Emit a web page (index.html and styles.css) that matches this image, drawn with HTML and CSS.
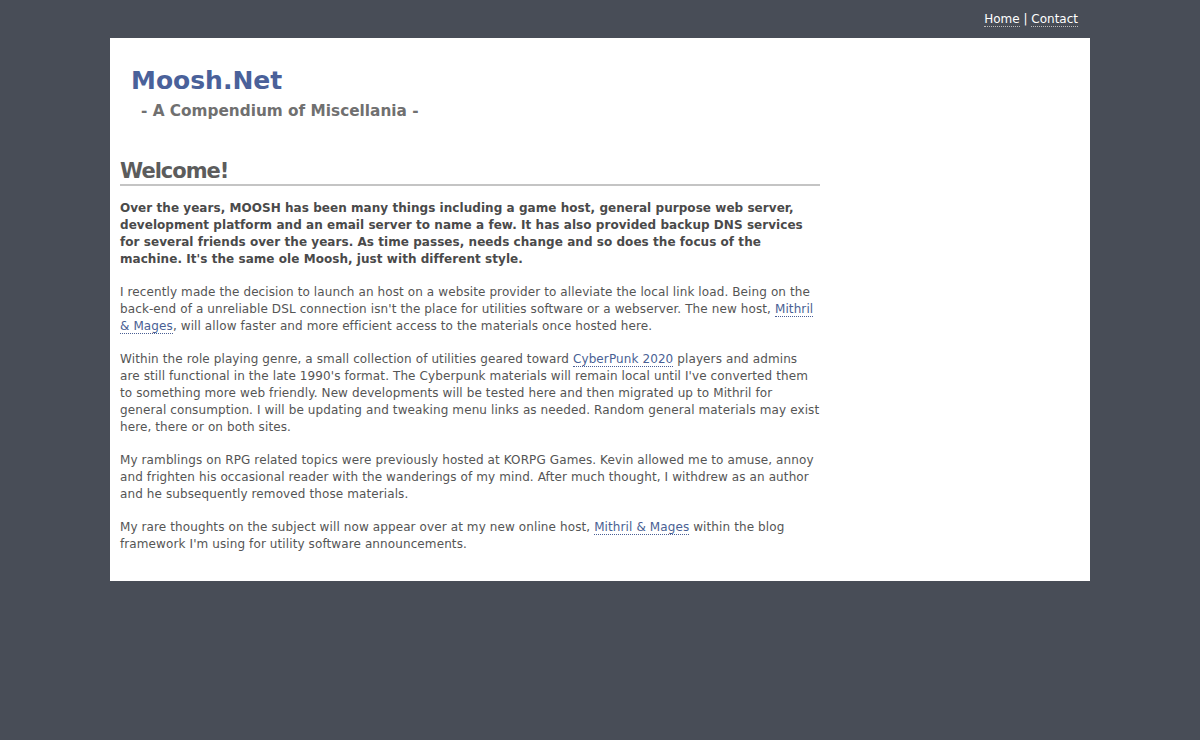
FILE: index.html
```html
<!DOCTYPE html>
<html>
<head>
<meta charset="utf-8">
<title>Moosh.Net</title>
<link rel="stylesheet" href="styles.css">
</head>
<body>
<div class="page">
  <div class="topnav"><a href="#">Home</a> | <a href="#">Contact</a></div>
  <div class="box">
    <div class="header">
      <div class="title">Moosh.Net</div>
      <div class="subtitle">- A Compendium of Miscellania -</div>
    </div>
    <div class="content">
      <h1>Welcome!</h1>
      <p class="lead">Over the years, MOOSH has been many things including a game host, general purpose web server, development platform and an email server to name a few. It has also provided backup DNS services for several friends over the years. As time passes, needs change and so does the focus of the machine. It's the same ole Moosh, just with different style.</p>
      <p>I recently made the decision to launch an host on a website provider to alleviate the local link load. Being on the back-end of a unreliable DSL connection isn't the place for utilities software or a webserver. The new host, <a href="#">Mithril &amp; Mages</a>, will allow faster and more efficient access to the materials once hosted here.</p>
      <p>Within the role playing genre, a small collection of utilities geared toward <a href="#">CyberPunk 2020</a> players and admins are still functional in the late 1990's format. The Cyberpunk materials will remain local until I've converted them to something more web friendly. New developments will be tested here and then migrated up to Mithril for general consumption. I will be updating and tweaking menu links as needed. Random general materials may exist here, there or on both sites.</p>
      <p>My ramblings on RPG related topics were previously hosted at KORPG Games. Kevin allowed me to amuse, annoy and frighten his occasional reader with the wanderings of my mind. After much thought, I withdrew as an author and he subsequently removed those materials.</p>
      <p>My rare thoughts on the subject will now appear over at my new online host, <a href="#">Mithril &amp; Mages</a> within the blog framework I'm using for utility software announcements.</p>
    </div>
  </div>
</div>
</body>
</html>
```
FILE: styles.css
```css
html, body {
  margin: 0;
  padding: 0;
  background: #484d57;
}
body {
  font-family: "DejaVu Sans", Verdana, sans-serif;
  font-size: 12px;
  color: #555;
}
.page {
  width: 980px;
  margin: 0 auto;
}
.topnav {
  height: 38px;
  box-sizing: border-box;
  padding: 11px 12px 0 0;
  text-align: right;
  color: #fff;
  font-size: 12px;
  line-height: 17px;
}
.topnav a {
  color: #fff;
  text-decoration: none;
  border-bottom: 1px dotted #bbb;
}
.box {
  background: #fff;
  padding: 25px 10px 12px 10px;
}
.header {
  padding-left: 11px;
  margin-bottom: 35px;
}
.title {
  font-size: 25px;
  font-weight: bold;
  color: #4a619a;
  line-height: 36px;
}
.subtitle {
  font-size: 15.3px;
  font-weight: bold;
  color: #707070;
  line-height: 24px;
  padding-left: 10px;
}
.content {
  width: 700px;
}
h1 {
  font-size: 21px;
  font-weight: bold;
  color: #5c5c5c;
  margin: 0 0 14px 0;
  line-height: 26px;
  border-bottom: 2px solid #c4c4c4;
  letter-spacing: -1px;
}
p {
  margin: 0 0 16px 0;
  line-height: 17px;
  letter-spacing: 0.105px;
}
p.lead {
  font-weight: bold;
  color: #4a4a4a;
  letter-spacing: 0.05px;
}
.content a {
  color: #4a5f94;
  text-decoration: none;
  border-bottom: 1px dotted #4a5f94;
}
```
